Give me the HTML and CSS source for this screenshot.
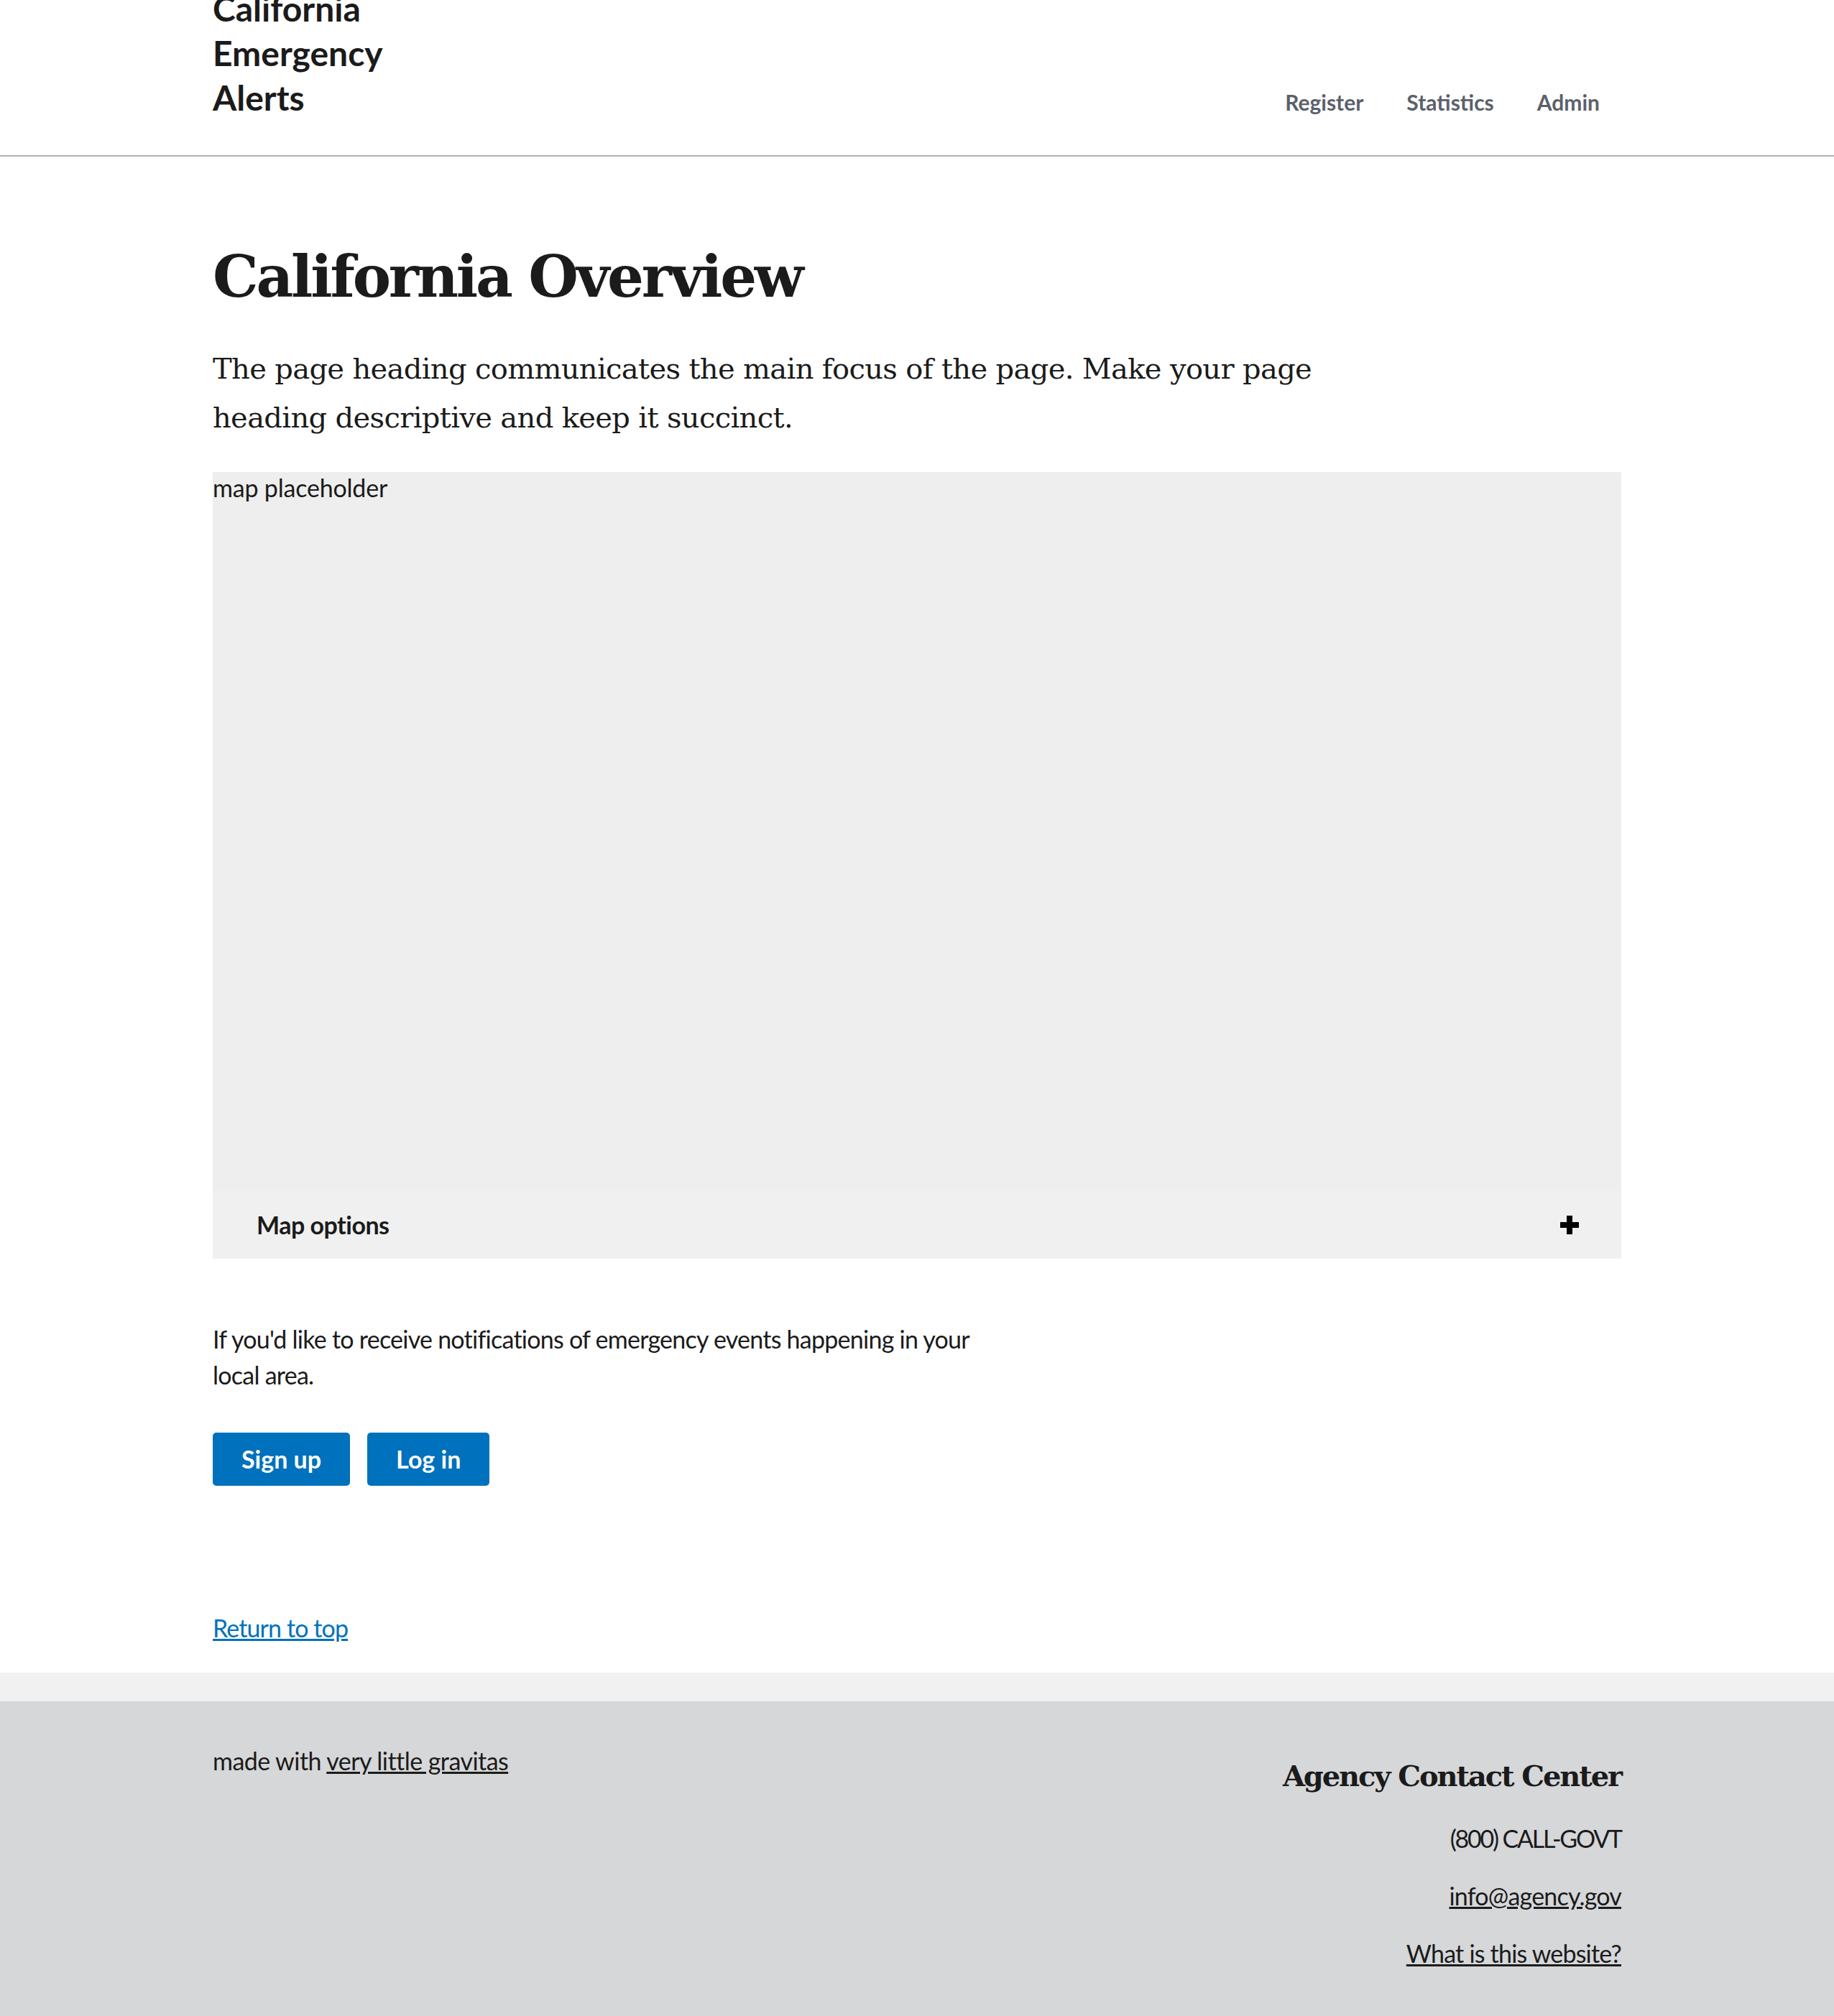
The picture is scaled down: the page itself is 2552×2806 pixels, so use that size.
FILE: index.html
```html
<!DOCTYPE html>
<html lang="en">
<head>
<meta charset="utf-8">
<title>California Emergency Alerts</title>
<link rel="stylesheet" href="styles.css">
</head>
<body>
<header class="site-header">
  <div class="container header-inner">
    <div class="logo">California Emergency Alerts</div>
    <ul class="nav">
      <li><a href="#">Register</a></li>
      <li><a href="#">Statistics</a></li>
      <li><a href="#">Admin</a></li>
    </ul>
  </div>
</header>
<main class="container main">
  <h1 class="title">California Overview</h1>
  <p class="intro">The page heading communicates the main focus of the page. Make your page heading descriptive and keep it succinct.</p>
  <section class="map">
    <div class="map-canvas">map placeholder</div>
    <button class="accordion-btn" type="button">
      <span>Map options</span>
      <svg class="plus" width="26" height="26" viewBox="0 0 26 26"><rect x="9" y="0" width="8" height="26" fill="#000"/><rect x="0" y="9" width="26" height="8" fill="#000"/></svg>
    </button>
  </section>
  <p class="notice">If you'd like to receive notifications of emergency events happening in your local area.</p>
  <div class="buttons">
    <a class="btn" href="#">Sign up</a>
    <a class="btn" href="#">Log in</a>
  </div>
  <p class="return"><a href="#">Return to top</a></p>
</main>
<div class="band"></div>
<footer class="site-footer">
  <div class="container footer-inner">
    <p class="made">made with <a href="#">very little gravitas</a></p>
    <div class="contact">
      <h3 class="contact-title">Agency Contact Center</h3>
      <span class="contact-item">(800) CALL-GOVT</span>
      <a class="contact-item" href="#">info@agency.gov</a>
      <a class="contact-item" href="#">What is this website?</a>
    </div>
  </div>
</footer>
</body>
</html>
```

FILE: styles.css
```css
* { box-sizing: border-box; }
html, body { margin: 0; padding: 0; }
body {
  font-family: Lato, "Liberation Sans", sans-serif;
  color: #1b1b1b;
  background: #fff;
}
.container { width: 1960px; margin: 0 auto; }

.site-header { border-bottom: 2px solid #aeb0b5; }
.header-inner {
  height: 216px;
  display: flex;
  justify-content: space-between;
  align-items: flex-end;
}
.logo {
  font-size: 48px;
  font-weight: 700;
  line-height: 62px;
  max-width: 300px;
  margin: 0 0 49px;
  color: #1b1b1b;
}
.nav {
  display: flex;
  list-style: none;
  margin: 0 0 59px;
  padding: 0;
}
.nav a {
  display: block;
  padding: 0 30px;
  font-size: 30px;
  font-weight: 700;
  line-height: 30px;
  color: #5b616b;
  text-decoration: none;
}
.nav li:last-child a { padding-right: 30px; }

.main { padding-top: 119px; padding-bottom: 37px; }
.title {
  font-family: "DejaVu Serif", serif;
  font-size: 80px;
  line-height: 96px;
  font-weight: 700;
  letter-spacing: -3.2px;
  margin: 0;
  color: #1b1b1b;
}
.intro {
  font-family: "DejaVu Serif", serif;
  font-size: 40px;
  line-height: 68px;
  letter-spacing: -0.65px;
  margin: 46px 0 0;
  max-width: 1620px;
}
.map { margin-top: 42px; }
.map-canvas {
  height: 1000px;
  background: #eeeeee;
  font-size: 34px;
  line-height: 1.3;
  letter-spacing: -0.2px;
}
.accordion-btn {
  width: 100%;
  height: 95px;
  display: flex;
  align-items: center;
  justify-content: space-between;
  padding: 0 59px 0 61px;
  background: #f0f0f0;
  border: 0;
  font-family: inherit;
  font-size: 34px;
  font-weight: 700;
  letter-spacing: -0.5px;
  color: #1b1b1b;
  text-align: left;
}
.plus { display: block; }

.notice {
  margin: 87px 0 0;
  font-size: 34px;
  line-height: 50px;
  letter-spacing: -0.75px;
  max-width: 1090px;
}
.buttons {
  display: flex;
  gap: 24px;
  margin-top: 55px;
}
.btn {
  display: block;
  height: 74px;
  line-height: 74px;
  padding: 0 40px;
  background: #0071bc;
  color: #fff;
  border-radius: 5px;
  font-size: 34px;
  font-weight: 700;
  text-decoration: none;
}
.return {
  margin: 172px 0 0;
  font-size: 34px;
  line-height: 51px;
  letter-spacing: -0.9px;
}
.return a { color: #0071bc; }

.band { height: 40px; background: #f1f1f1; }
.site-footer { background: #d6d7d9; padding-bottom: 80px; }
.footer-inner {
  display: flex;
  justify-content: space-between;
  align-items: flex-start;
}
.made {
  margin: 57px 0 0;
  font-size: 34px;
  line-height: 51px;
  letter-spacing: -0.55px;
}
.made a { color: #1b1b1b; }
.contact {
  margin-top: 80px;
  display: flex;
  flex-direction: column;
  align-items: flex-end;
  gap: 29px;
  text-align: right;
}
.contact-title {
  font-family: "DejaVu Serif", serif;
  font-size: 40px;
  line-height: 48px;
  font-weight: 700;
  letter-spacing: -2.1px;
  margin: 0 0 8px;
}
.contact-item {
  font-size: 34px;
  line-height: 51px;
  letter-spacing: -2.2px;
  color: #1b1b1b;
}
a.contact-item { color: #1b1b1b; letter-spacing: -0.8px; }
```
